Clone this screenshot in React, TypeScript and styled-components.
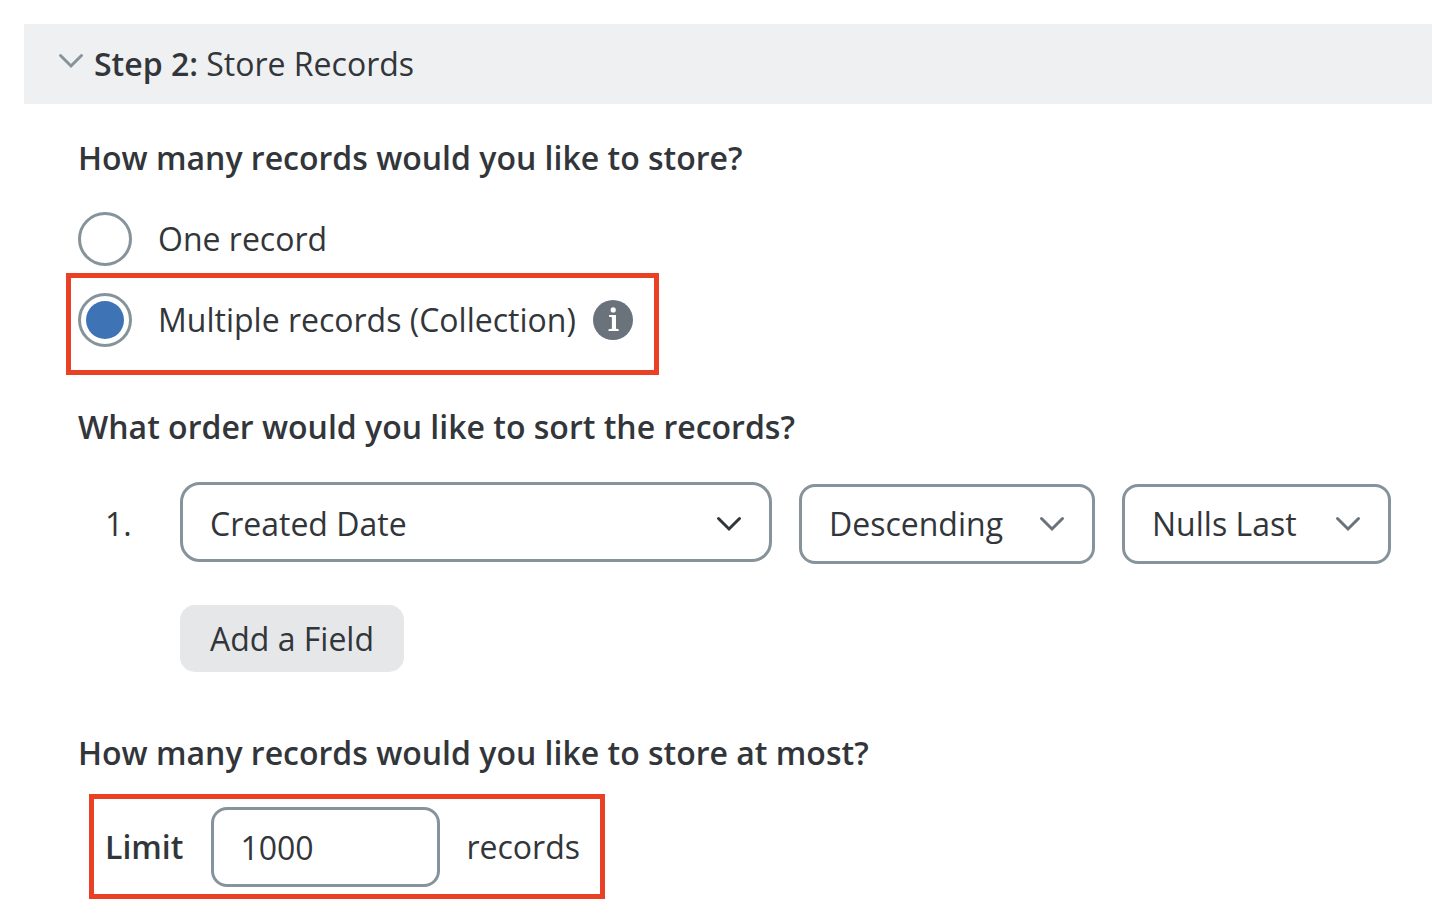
import React, { useState } from "react";
import styled, { createGlobalStyle } from "styled-components";

const color = {
  text: "#32363a",
  line: "#87939a",
  bar: "#eff0f2",
  button: "#e6e7e9",
  blue: "#3e73b5",
  info: "#6a737b",
  mark: "#ea4025",
};

const GlobalStyle = createGlobalStyle`
  * { box-sizing: border-box; }
  body {
    margin: 0;
    background: #fff;
    color: ${color.text};
    font: 400 32px/44px "Open Sans", "Noto Sans", sans-serif;
  }
  button, input, select { font: inherit; color: inherit; margin: 0; }
`;

const Page = styled.main`
  padding: 24px 0 24px 24px;
`;

const StepHeader = styled.button`
  display: flex;
  align-items: center;
  gap: 10px;
  width: 100%;
  height: 80px;
  padding: 0 34px;
  border: 0;
  background: ${color.bar};
  text-align: left;
  cursor: pointer;
`;

const StepNumber = styled.strong`
  font-weight: 600;
`;

const HeaderChevron = styled.span`
  display: flex;
  padding-bottom: 6px;
`;

const StepBody = styled.div`
  padding: 32px 41px 0 54px;
`;

const Group = styled.fieldset<{ $gap: number }>`
  min-width: 0;
  margin: 0 0 ${(p) => p.$gap}px;
  padding: 0;
  border: 0;
`;

const Question = styled.legend<{ $gap: number }>`
  padding: 0;
  margin-bottom: ${(p) => p.$gap}px;
  font-weight: 600;
`;

const Highlight = styled.div<{ $indent: number; $padding: string }>`
  display: flex;
  align-items: center;
  width: fit-content;
  margin-left: ${(p) => p.$indent}px;
  padding: ${(p) => p.$padding};
  border: 5px solid ${color.mark};
`;

const Option = styled.label`
  display: flex;
  align-items: center;
  gap: 26px;
  width: fit-content;
  height: 54px;
`;

const OptionSlot = styled.div`
  margin-bottom: 7px;
`;

const Radio = styled.input`
  appearance: none;
  display: grid;
  place-items: center;
  width: 54px;
  height: 54px;
  border: 3px solid ${color.line};
  border-radius: 50%;
  background: #fff;

  &:checked::before {
    content: "";
    width: 38px;
    height: 38px;
    border-radius: 50%;
    background: ${color.blue};
  }
`;

const InfoButton = styled.button`
  display: flex;
  margin-left: 17px;
  padding: 0;
  border: 0;
  background: none;
  cursor: pointer;
`;

const SortRow = styled.div`
  display: flex;
  gap: 27px;
  margin-bottom: 41px;
`;

const SortNumber = styled.span`
  width: 48px;
  margin-left: 27px;
  padding-top: 20px;
`;

const SelectBox = styled.div<{ $width?: number; $top?: number }>`
  position: relative;
  flex: ${(p) => (p.$width ? `0 0 ${p.$width}px` : "1 1 0")};
  min-width: 0;
  padding-top: ${(p) => p.$top ?? 0}px;
`;

const Select = styled.select<{ $large?: boolean }>`
  appearance: none;
  display: block;
  width: 100%;
  height: 80px;
  padding: ${(p) => (p.$large ? 4 : 0)}px 60px 0 27px;
  border: 3px solid ${color.line};
  border-radius: ${(p) => (p.$large ? 20 : 16)}px;
  background: #fff;
`;

const SelectChevron = styled.span`
  position: absolute;
  top: 34px;
  right: 30px;
  display: flex;
  pointer-events: none;
`;

const AddButton = styled.button`
  display: block;
  height: 67px;
  margin-left: 102px;
  padding: 0 30px;
  border: 0;
  border-radius: 15px;
  background: ${color.button};
  cursor: pointer;
`;

const LimitLabel = styled.label`
  margin-right: 28px;
  font-weight: 600;
`;

const LimitInput = styled.input`
  width: 229px;
  height: 80px;
  margin-right: 26px;
  padding: 0 26px;
  border: 3px solid ${color.line};
  border-radius: 16px;
  background: #fff;
`;

function Chevron({ stroke }: { stroke: string }) {
  return (
    <svg width="26" height="16" viewBox="0 0 26 16" fill="none" aria-hidden="true">
      <path d="M2.5 2.5 13 13 23.5 2.5" stroke={stroke} strokeWidth="3" strokeLinecap="round" />
    </svg>
  );
}

function InfoIcon() {
  return (
    <svg width="40" height="40" viewBox="0 0 40 40" aria-hidden="true">
      <circle cx="20" cy="20" r="20" fill={color.info} />
      <circle cx="20.2" cy="9.9" r="2.6" fill="#fff" />
      <path d="M16 15h7v13.8l2.7.4V31H15.5v-1.8l3.4-.4V17.2l-2.9-.4z" fill="#fff" />
    </svg>
  );
}

export default function App() {
  const [open, setOpen] = useState(true);
  const [amount, setAmount] = useState("multiple");
  return (
    <Page>
      <GlobalStyle />
      <StepHeader type="button" aria-expanded={open} onClick={() => setOpen(!open)}>
        <HeaderChevron>
          <Chevron stroke={color.line} />
        </HeaderChevron>
        <span>
          <StepNumber>Step 2:</StepNumber> Store Records
        </span>
      </StepHeader>
      {open && (
        <StepBody>
          <Group $gap={30}>
            <Question $gap={32}>How many records would you like to store?</Question>
            <OptionSlot>
              <Option>
                <Radio type="radio" name="amount" checked={amount === "one"} onChange={() => setAmount("one")} />
                One record
              </Option>
            </OptionSlot>
            <Highlight $indent={-12} $padding="15px 21px 23px 7px">
              <Option>
                <Radio
                  type="radio"
                  name="amount"
                  checked={amount === "multiple"}
                  onChange={() => setAmount("multiple")}
                />
                Multiple records (Collection)
              </Option>
              <InfoButton type="button" aria-label="About collections">
                <InfoIcon />
              </InfoButton>
            </Highlight>
          </Group>

          <Group $gap={59}>
            <Question $gap={33}>What order would you like to sort the records?</Question>
            <SortRow>
              <SortNumber>1.</SortNumber>
              <SelectBox>
                <Select $large aria-label="Sort field">
                  <option>Created Date</option>
                </Select>
                <SelectChevron>
                  <Chevron stroke={color.text} />
                </SelectChevron>
              </SelectBox>
              <SelectBox $width={296} $top={2}>
                <Select aria-label="Sort direction">
                  <option>Descending</option>
                  <option>Ascending</option>
                </Select>
                <SelectChevron>
                  <Chevron stroke={color.info} />
                </SelectChevron>
              </SelectBox>
              <SelectBox $width={269} $top={2}>
                <Select aria-label="Position of nulls">
                  <option>Nulls Last</option>
                  <option>Nulls First</option>
                </Select>
                <SelectChevron>
                  <Chevron stroke={color.info} />
                </SelectChevron>
              </SelectBox>
            </SortRow>
            <AddButton type="button">Add a Field</AddButton>
          </Group>

          <Group $gap={0}>
            <Question $gap={19}>How many records would you like to store at most?</Question>
            <Highlight $indent={11} $padding="8px 20px 7px 11px">
              <LimitLabel htmlFor="limit">Limit</LimitLabel>
              <LimitInput id="limit" type="text" inputMode="numeric" defaultValue="1000" />
              records
            </Highlight>
          </Group>
        </StepBody>
      )}
    </Page>
  );
}
